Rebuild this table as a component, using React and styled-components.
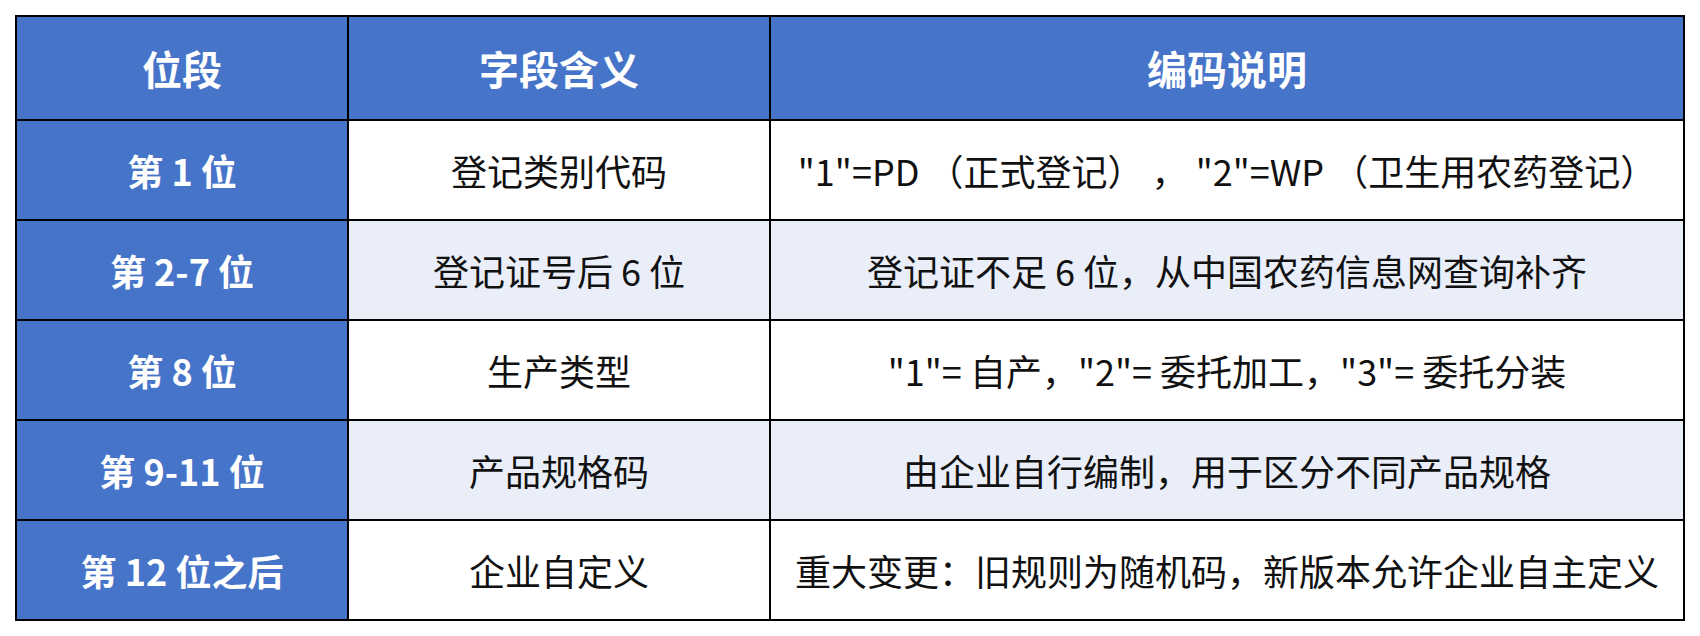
import React from 'react';
import styled, { createGlobalStyle } from "styled-components";

const rows = [
  { pos: '第 1 位', meaning: '登记类别代码', desc: '"1"=PD （正式登记） ， "2"=WP （卫生用农药登记）' },
  { pos: '第 2-7 位', meaning: '登记证号后 6 位', desc: '登记证不足 6 位，从中国农药信息网查询补齐' },
  { pos: '第 8 位', meaning: '生产类型', desc: '"1"= 自产，"2"= 委托加工，"3"= 委托分装' },
  { pos: '第 9-11 位', meaning: '产品规格码', desc: '由企业自行编制，用于区分不同产品规格' },
  { pos: '第 12 位之后', meaning: '企业自定义', desc: '重大变更：旧规则为随机码，新版本允许企业自主定义' },
];

const GlobalStyle = createGlobalStyle`
  html, body {
    margin: 0;
    padding: 0;
    background: #ffffff;
  }
  body {
    font-family: "Noto Sans CJK SC", "Noto Sans", sans-serif;
  }
`;

const Page = styled.div`
  padding: 15px;
`;

const Grid = styled.div`
  display: grid;
  grid-template-columns: 330px 420px 912px;
  grid-template-rows: 102px repeat(5, 98px);
  gap: 2px;
  padding: 2px;
  width: max-content;
  background: #000;
`;

const HeadCell = styled.div`
  display: flex;
  align-items: center;
  justify-content: center;
  background: #4674c9;
  color: #fff;
  font-size: 40px;
  font-weight: 700;
`;

const PosCell = styled.div`
  display: flex;
  align-items: center;
  justify-content: center;
  background: #4674c9;
  color: #fff;
  font-size: 36px;
  font-weight: 700;
  white-space: pre;
`;

const Cell = styled.div`
  display: flex;
  align-items: center;
  justify-content: center;
  background: ${p => (p.$shaded ? '#e9eef8' : '#ffffff')};
  color: #111;
  font-size: 36px;
  font-weight: 400;
  white-space: pre;
`;

export default function App() {
  return (
    <Page>
      <GlobalStyle />
      <Grid>
        <HeadCell>位段</HeadCell>
        <HeadCell>字段含义</HeadCell>
        <HeadCell>编码说明</HeadCell>
        {rows.map((r, i) => (
          <React.Fragment key={r.pos}>
            <PosCell>{r.pos}</PosCell>
            <Cell $shaded={i % 2 === 1}>{r.meaning}</Cell>
            <Cell $shaded={i % 2 === 1}>{r.desc}</Cell>
          </React.Fragment>
        ))}
      </Grid>
    </Page>
  );
}
